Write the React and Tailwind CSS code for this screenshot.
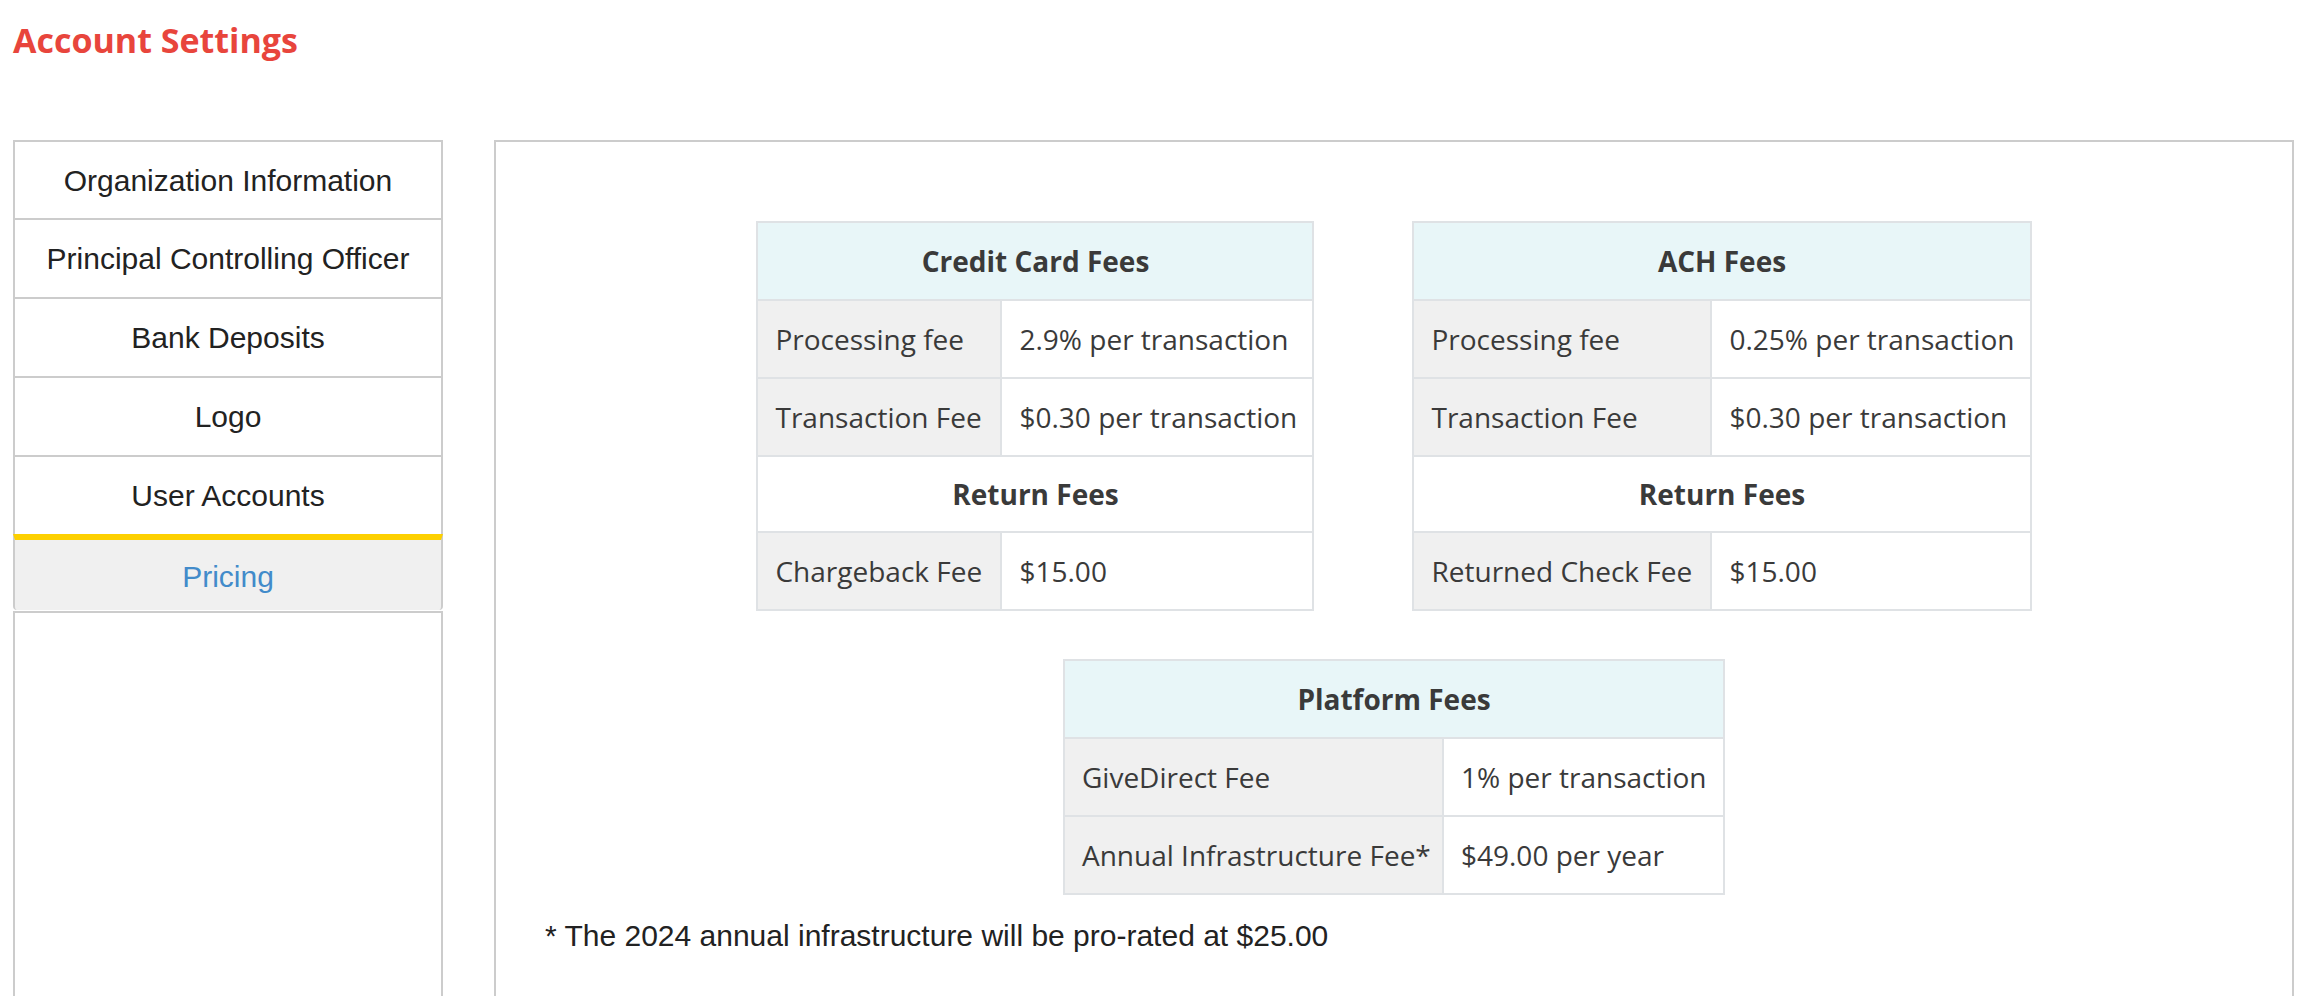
const menuItems = [
  'Organization Information',
  'Principal Controlling Officer',
  'Bank Deposits',
  'Logo',
  'User Accounts',
]

function FeeTable({ title, widths, rows, returnRows }) {
  return (
    <table
      className="table-fixed border-collapse text-[28px] text-[#3a3a3a] font-['Segoe_UI','Open_Sans',sans-serif]"
      style={{ width: widths[0] + widths[1] }}
    >
      <colgroup>
        <col style={{ width: widths[0] }} />
        <col style={{ width: widths[1] }} />
      </colgroup>
      <tbody>
        <tr>
          <th colSpan={2} className="h-[78px] border-2 border-[#dfe2e5] bg-[#e8f6f8] text-center font-bold">
            {title}
          </th>
        </tr>
        {rows.map(([label, value]) => (
          <tr key={label}>
            <td className="h-[78px] border-2 border-[#dfe2e5] bg-[#f0f0f0] px-[17px] whitespace-nowrap">{label}</td>
            <td className="h-[78px] border-2 border-[#dfe2e5] bg-white px-[17px] whitespace-nowrap">{value}</td>
          </tr>
        ))}
        {returnRows && (
          <>
            <tr>
              <th colSpan={2} className="h-[76px] border-2 border-[#dfe2e5] bg-white text-center font-bold">
                Return Fees
              </th>
            </tr>
            {returnRows.map(([label, value]) => (
              <tr key={label}>
                <td className="h-[78px] border-2 border-[#dfe2e5] bg-[#f0f0f0] px-[17px] whitespace-nowrap">{label}</td>
                <td className="h-[78px] border-2 border-[#dfe2e5] bg-white px-[17px] whitespace-nowrap">{value}</td>
              </tr>
            ))}
          </>
        )}
      </tbody>
    </table>
  )
}

export default function App() {
  return (
    <div className="h-[996px] overflow-hidden bg-white pl-[13px] pr-[27px]">
      {/* ページタイトル */}
      <h1 className="pt-[17px] h-[140px] text-[34px] leading-[46px] font-bold text-[#e8453c] font-['Segoe_UI','Open_Sans',sans-serif]">
        Account Settings
      </h1>

      <div className="flex gap-[51px]">
        {/* サイドメニュー */}
        <div className="w-[430px] shrink-0 flex flex-col font-['Liberation_Sans',Arial,sans-serif] text-[30px]">
          {menuItems.map((item, idx) => (
            <div
              key={item}
              className={`flex items-center justify-center border-x-2 border-b-2 border-[#cccccc] text-[#222] ${idx === 0 ? 'border-t-2 h-[80px]' : 'h-[79px]'}`}
            >
              {item}
            </div>
          ))}
          <div className="-mt-[2px] h-[76px] pt-[3px] flex items-center justify-center border-x-2 border-t-[6px] border-[#cccccc] border-t-[#fdd000] bg-[#f0f0f0] rounded-b-[4px] text-[#428bca]">
            Pricing
          </div>
          <div className="mt-[1px] h-[600px] border-2 border-[#cccccc]"></div>
        </div>

        {/* 料金パネル */}
        <div className="flex-1 h-[900px] border-2 border-[#cccccc] pt-[79px] pl-[49px]">
          <div className="flex justify-center gap-[98px] pr-[49px]">
            <FeeTable
              title="Credit Card Fees"
              widths={[244, 312]}
              rows={[
                ['Processing fee', '2.9% per transaction'],
                ['Transaction Fee', '$0.30 per transaction'],
              ]}
              returnRows={[['Chargeback Fee', '$15.00']]}
            />
            <FeeTable
              title="ACH Fees"
              widths={[298, 319]}
              rows={[
                ['Processing fee', '0.25% per transaction'],
                ['Transaction Fee', '$0.30 per transaction'],
              ]}
              returnRows={[['Returned Check Fee', '$15.00']]}
            />
          </div>

          <div className="mt-[48px] flex justify-center pr-[49px]">
            <FeeTable
              title="Platform Fees"
              widths={[379, 281]}
              rows={[
                ['GiveDirect Fee', '1% per transaction'],
                ['Annual Infrastructure Fee*', '$49.00 per year'],
              ]}
            />
          </div>

          <p className="mt-[24px] text-[30px] leading-[34px] text-[#222] font-['Liberation_Sans',Arial,sans-serif]">
            * The 2024 annual infrastructure will be pro-rated at $25.00
          </p>
        </div>
      </div>
    </div>
  )
}
